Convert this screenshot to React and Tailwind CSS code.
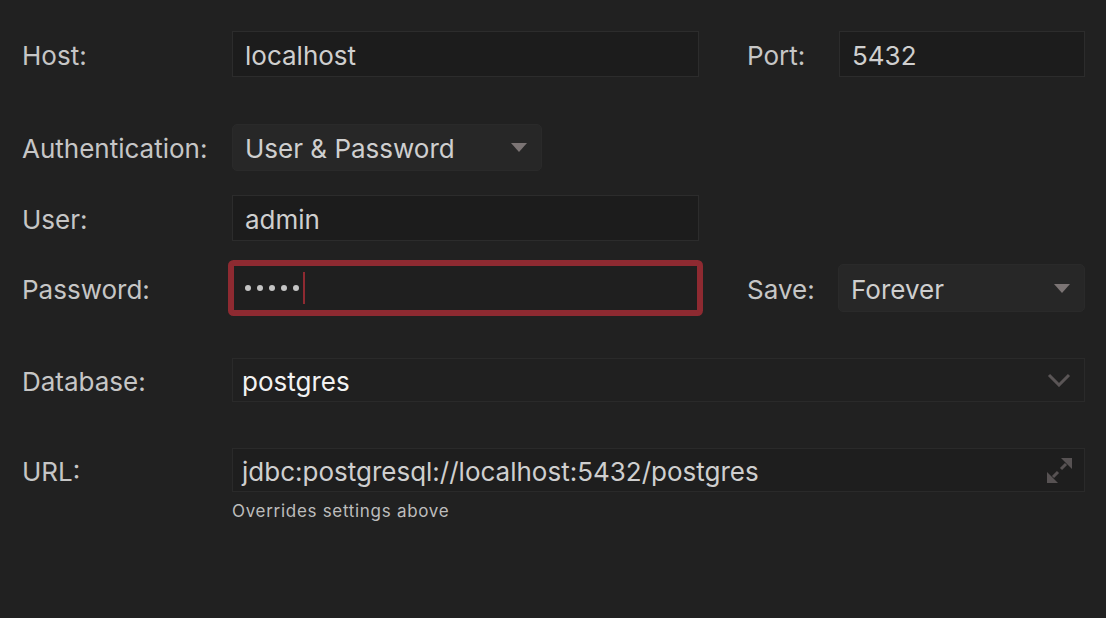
import React from 'react';

const ExpandIcon = () => (
  <svg width="25" height="25" viewBox="0 0 25 25" className="text-[#575253]">
    <polygon points="25,0 25,11 14,0" fill="currentColor" />
    <polygon points="0,25 0,14 11,25" fill="currentColor" />
    <line x1="19" y1="6" x2="14" y2="11" stroke="currentColor" strokeWidth="3" />
    <line x1="6" y1="19" x2="11" y2="14" stroke="currentColor" strokeWidth="3" />
  </svg>
);

const Caret = () => (
  <svg width="16" height="9" viewBox="0 0 16 9">
    <polygon points="0,0 16,0 8,9" fill="#7b7474" />
  </svg>
);

const Chevron = () => (
  <svg width="24" height="14" viewBox="0 0 24 14">
    <polyline points="2,2 12,12 22,2" fill="none" stroke="#5a5556" strokeWidth="3" />
  </svg>
);

const Label = ({ children, className = '' }) => (
  <div className={`w-[232px] shrink-0 pl-[22px] pt-[3px] text-[26px] text-[#c6c6c6] ${className}`}>{children}</div>
);

const TextBox = ({ children, className = '' }) => (
  <div className={`flex items-center border border-[#2c2c2c] bg-[#1c1c1c] pl-3 text-[26px] text-[#cfcfcf] ${className}`}>
    <span className="pt-[3px]">{children}</span>
  </div>
);

const Select = ({ children, className = '' }) => (
  <div className={`flex items-center justify-between rounded-[5px] border border-[#2a2a2a] bg-[#272727] pl-3 pr-[14px] text-[26px] text-[#cfcfcf] ${className}`}>
    <span className="pt-[3px]">{children}</span>
    <Caret />
  </div>
);

export default function App() {
  return (
    <div className="h-[618px] w-[1106px] overflow-hidden bg-[#212121] pt-[31px] font-['Inter',sans-serif] leading-none">
      {/* Host / Port */}
      <div className="flex h-[46px] items-center">
        <Label>Host:</Label>
        <TextBox className="h-[46px] w-[467px]">localhost</TextBox>
        <div className="w-[140px] shrink-0 pl-[48px] pt-[3px] text-[26px] text-[#c6c6c6]">Port:</div>
        <TextBox className="h-[46px] w-[246px]">5432</TextBox>
      </div>

      {/* Authentication */}
      <div className="mt-[47px] flex h-[47px] items-center">
        <Label>Authentication:</Label>
        <Select className="h-[47px] w-[310px]">User &amp; Password</Select>
      </div>

      {/* User */}
      <div className="mt-[24px] flex h-[46px] items-center">
        <Label>User:</Label>
        <TextBox className="h-[46px] w-[467px]">admin</TextBox>
      </div>

      {/* Password / Save */}
      <div className="mt-[23px] flex h-[48px] items-center">
        <Label>Password:</Label>
        <div className="flex h-[48px] w-[467px] items-center rounded-[2px] border-2 border-[#8e2a31] bg-[#1f1f1f] pl-[11px] ring-4 ring-[#8e2a31]">
          <div className="flex gap-[6px]">
            <span className="h-[6px] w-[6px] rounded-full bg-[#c4c4c4]" />
            <span className="h-[6px] w-[6px] rounded-full bg-[#c4c4c4]" />
            <span className="h-[6px] w-[6px] rounded-full bg-[#c4c4c4]" />
            <span className="h-[6px] w-[6px] rounded-full bg-[#c4c4c4]" />
            <span className="h-[6px] w-[6px] rounded-full bg-[#c4c4c4]" />
          </div>
          <span className="ml-[4px] h-[32px] w-[2px] bg-[#8e2a31]" />
        </div>
        <div className="w-[139px] shrink-0 pl-[48px] pt-[3px] text-[26px] text-[#c6c6c6]">Save:</div>
        <Select className="h-[48px] w-[247px]">Forever</Select>
      </div>

      {/* Database */}
      <div className="mt-[46px] flex h-[44px] items-center">
        <Label>Database:</Label>
        <div className="flex h-[44px] w-[853px] items-center justify-between border border-[#2a2a2a] bg-[#202020] pl-[9px] pr-[13px] text-[26px] text-[#f2f2f2]">
          <span className="pt-[3px]">postgres</span>
          <Chevron />
        </div>
      </div>

      {/* URL */}
      <div className="mt-[46px] flex items-start">
        <Label className="flex h-[44px] items-center">URL:</Label>
        <div className="flex flex-col">
          <div className="flex h-[44px] w-[853px] items-center justify-between border border-[#2a2a2a] bg-[#1e1e1e] pl-[9px] pr-[12px] text-[26px] text-[#cfcfcf]">
            <span className="pt-[3px]">jdbc:postgresql://localhost:5432/postgres</span>
            <ExpandIcon />
          </div>
          <div className="mt-[11px] text-[17px] tracking-[0.7px] text-[#bdbdbd]">Overrides settings above</div>
        </div>
      </div>
    </div>
  );
}
